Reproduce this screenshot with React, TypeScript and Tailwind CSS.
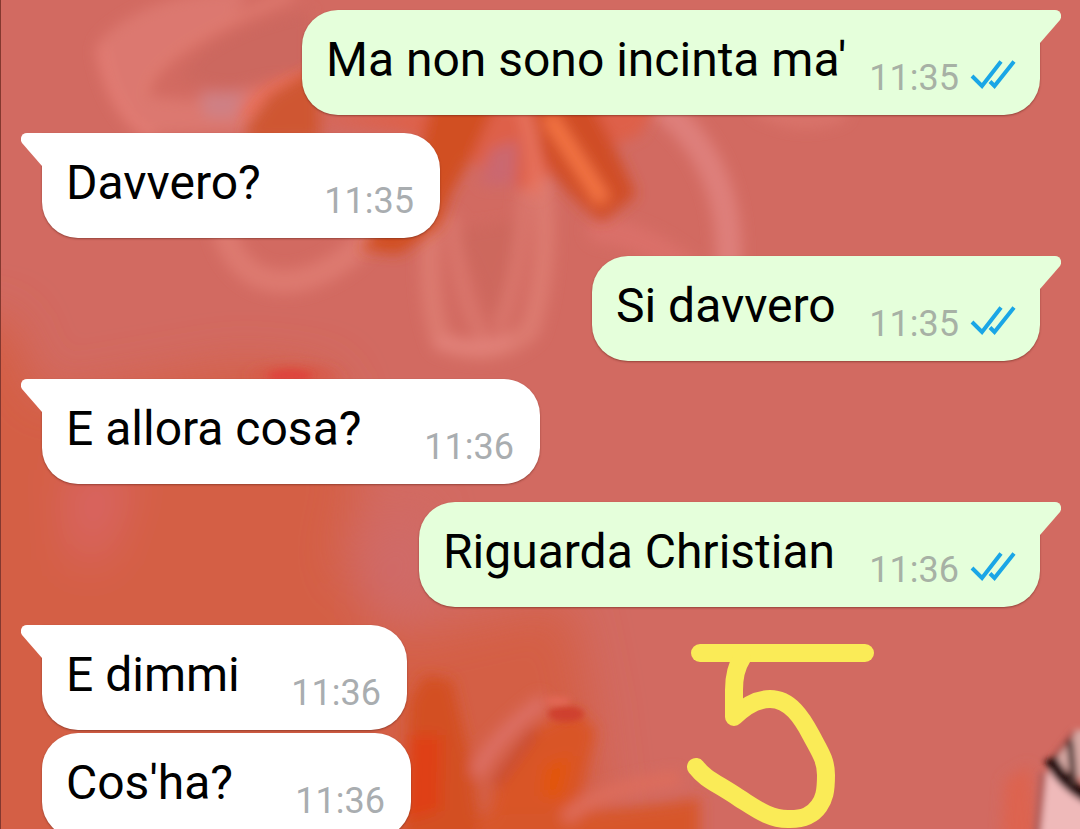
interface Message {
  text: string
  time: string
  sent?: boolean
  tail?: boolean
  width: string
}

const messages: Message[] = [
  { text: "Ma non sono incinta ma'", time: '11:35', sent: true, tail: true, width: 'w-[738px]' },
  { text: 'Davvero?', time: '11:35', tail: true, width: 'w-[398px]' },
  { text: 'Si davvero', time: '11:35', sent: true, tail: true, width: 'w-[448px]' },
  { text: 'E allora cosa?', time: '11:36', tail: true, width: 'w-[498px]' },
  { text: 'Riguarda Christian', time: '11:36', sent: true, tail: true, width: 'w-[621px]' },
  { text: 'E dimmi', time: '11:36', tail: true, width: 'w-[365px]' },
  { text: "Cos'ha?", time: '11:36', width: 'w-[369px]' },
]

function Wallpaper() {
  return (
    <svg
      aria-hidden="true"
      viewBox="0 0 1080 829"
      preserveAspectRatio="xMinYMin slice"
      className="absolute inset-0 h-full w-full"
    >
      <defs>
        <filter id="soft" filterUnits="userSpaceOnUse" x="-100" y="-100" width="1280" height="1030">
          <feGaussianBlur stdDeviation="7" />
        </filter>
        <filter id="wide" filterUnits="userSpaceOnUse" x="-200" y="-100" width="1480" height="1130">
          <feGaussianBlur stdDeviation="24" />
        </filter>
        <filter id="fine" filterUnits="userSpaceOnUse" x="-100" y="-100" width="1280" height="1030">
          <feGaussianBlur stdDeviation="3" />
        </filter>
      </defs>
      <rect width="1080" height="829" fill="#d26a61" />

      {/* large orange haze on the lower left */}
      <g filter="url(#wide)">
        <path d="M-160 310 L10 320 L40 400 L240 365 L330 375 L360 480 L340 560 L390 640 L570 600 L590 700 L620 960 L-160 960Z" fill="#d45f45" />
        <path d="M70 470 L130 470 L100 560 L75 560Z" fill="#da6668" />
        <path d="M370 540 L420 500 L430 600 L360 610Z" fill="#cf6a69" />
      </g>

      {/* upper flower: pale petals */}
      <g filter="url(#soft)" fill="none" strokeLinecap="round">
        <path d="M100 40 Q150 -10 250 -10 L230 20 Q150 60 140 95 L190 100 L300 80 L300 130 L150 135 Q105 90 100 40Z" fill="#dc7870" />
        <path d="M180 80 Q200 35 310 10 L310 70 L230 88Z" fill="#cc685e" />
        <path d="M102 50 Q112 110 150 135" stroke="#e27c73" strokeWidth="12" />
        <path d="M145 92 Q150 50 290 -5" stroke="#df7a70" strokeWidth="10" />
        <path d="M200 92 H245 L235 118 H205Z" fill="#cf8084" />
        <path d="M250 112 Q270 85 310 80" stroke="#e8705b" strokeWidth="18" />
        <path d="M455 230 L520 220 L495 325Z" fill="#cd675d" />
        <path d="M432 215 Q425 300 442 342 Q495 362 530 330 Q555 250 537 150" stroke="#dc7a70" strokeWidth="20" />
        <path d="M452 220 Q460 300 482 335 M500 325 Q525 260 525 170" stroke="#da776d" strokeWidth="13" />
        <path d="M440 342 Q480 352 505 340" stroke="#e2827a" strokeWidth="12" />
        <path d="M660 105 Q735 165 728 270" stroke="#de7f7a" strokeWidth="26" />
        <path d="M600 230 Q650 235 700 280" stroke="#da7069" strokeWidth="26" />
        <path d="M225 235 Q245 290 300 280 Q340 270 370 235" stroke="#dd7970" strokeWidth="24" />
        <path d="M760 108 Q800 130 840 114" stroke="#da756c" strokeWidth="14" />
      </g>

      {/* upper flower: orange centre */}
      <g filter="url(#soft)">
        <path d="M245 130 L270 95 L320 65 L320 140 L250 142Z" fill="#cf5732" />
        <path d="M310 120 L660 95 L640 135 L600 150 L520 190 L445 145 L400 130Z" fill="#de6048" />
        <path d="M360 250 L410 190 L435 90 L500 95 L475 150 L450 195 L440 225 L400 254Z" fill="#d14f24" />
        <path d="M530 95 L590 100 Q620 155 636 195 L602 222 Q555 190 526 125Z" fill="#d04e26" />
        <path d="M490 150 L518 140 L515 185 L480 185Z" fill="#cb6870" />
        <path d="M522 105 Q540 155 534 195" stroke="#e87560" strokeWidth="12" fill="none" />
        <path d="M548 115 L604 202" stroke="#f47544" strokeWidth="16" fill="none" />
      </g>
      <path d="M245 378 Q290 358 345 378Z" fill="#dc4c3a" filter="url(#soft)" />
      <ellipse cx="290" cy="376" rx="22" ry="6" fill="#de443c" filter="url(#fine)" />

      {/* lower flower */}
      <g filter="url(#soft)">
        <path d="M400 860 L410 700 L425 675 L452 680 L468 750 L485 860Z" fill="#d35020" />
        <path d="M410 735 L442 735 L440 810 L408 820Z" fill="#df3f18" />
        <path d="M478 860 L500 775 L535 730 L575 710 L596 730 L582 790 L550 860Z" fill="#d95528" />
        <path d="M545 765 L572 755 L562 800 L540 795Z" fill="#e25410" />
        <path d="M476 775 Q490 740 545 700" stroke="#dc6e64" strokeWidth="16" fill="none" />
        <path d="M495 785 L535 730" stroke="#c44a30" strokeWidth="8" />
        <path d="M470 860 L480 815 Q600 815 700 798 L700 860Z" fill="#d7562c" />
        <path d="M565 820 Q590 790 680 778" stroke="#de6d5c" strokeWidth="14" fill="none" />
      </g>
      <ellipse cx="566" cy="714" rx="18" ry="8" fill="#cf402e" filter="url(#fine)" />
      <ellipse cx="558" cy="701" rx="13" ry="4" fill="#e46756" filter="url(#fine)" />

      {/* face at the right edge */}
      <path d="M1005 780 L1030 765 L1040 860 L1000 860Z" fill="#dd6450" filter="url(#soft)" />
      <g filter="url(#fine)">
        <path d="M1044 775 L1054 765 L1100 805 V860 H1036Z" fill="#efb9b9" />
        <path d="M1052 762 L1075 730 L1100 730 V790Z" fill="#d8aaa5" />
        <path d="M1043 772 L1036 845" stroke="#b5605c" strokeWidth="8" />
        <path d="M1052 760 L1074 732" stroke="#a5504a" strokeWidth="5" />
        <path d="M1050 758 Q1062 785 1100 804" stroke="#260a09" strokeWidth="13" fill="none" />
        <path d="M1070 740 L1074 785" stroke="#4d3836" strokeWidth="7" />
      </g>
      <rect width="1" height="829" fill="#84382f" />
    </svg>
  )
}

function Tail({ sent }: { sent?: boolean }) {
  return (
    <svg
      aria-hidden="true"
      viewBox="0 0 22 34"
      className={`absolute top-0 h-[34px] w-[22px] ${
        sent ? '-right-[21px] -scale-x-100 text-[#e5ffdb]' : '-left-[21px] text-white'
      }`}
    >
      <path d="M22 0H6C1 0-2 5 1 10L21 33H22Z" fill="currentColor" />
    </svg>
  )
}

function ReadTicks() {
  return (
    <svg
      role="img"
      aria-label="Read"
      viewBox="0 0 46 30"
      className="ml-[11px] h-[30px] w-[46px]"
      fill="none"
      stroke="#1aa6e6"
      strokeWidth="4"
    >
      <path d="M2 16L12 26L31 1.500" />
      <path d="M20 21.500L24.500 26L44 1.500" />
    </svg>
  )
}

function Bubble({ message }: { message: Message }) {
  const { text, time, sent, tail, width } = message
  const corner = !tail ? '' : sent ? 'rounded-tr-none' : 'rounded-tl-none'

  return (
    <li className={`flex ${sent ? 'justify-end' : ''} ${tail ? 'mt-[18px] first:mt-0' : 'mt-[3px]'}`}>
      <div
        className={`relative flex h-[105px] items-baseline justify-between rounded-[36px] pt-[22px] pl-6 shadow-[0_1px_2px_rgba(90,30,20,0.5)] ${
          sent ? 'bg-[#e5ffdb] pr-6' : 'bg-white pr-[26px]'
        } ${corner} ${width}`}
      >
        {tail && <Tail sent={sent} />}
        <p className="text-[48px] leading-[56px] whitespace-nowrap text-black">{text}</p>
        <div className={`flex translate-y-[14px] items-baseline text-[36px] leading-[42px] ${sent ? 'text-[#a7b1a5]' : 'text-[#a9adb0]'}`}>
          <time>{time}</time>
          {sent && <ReadTicks />}
        </div>
      </div>
    </li>
  )
}

function Doodle() {
  return (
    <svg
      role="img"
      aria-label="5"
      viewBox="680 640 200 189"
      className="pointer-events-none absolute bottom-0 left-[63%] h-[189px] w-[200px]"
      fill="none"
      stroke="#faeb57"
      strokeWidth="18"
      strokeLinecap="round"
      strokeLinejoin="round"
    >
      <path d="M700 653H865" />
      <path d="M742 658Q734 670 734 690V717C746 705 757 699 770 699C790 699 802 718 811 735C820 752 826 760 826 775C826 792 824 799 819 806C812 816 803 819 790 819C770 820 755 808 739 798C717 783 706 780 696 767" />
    </svg>
  )
}

export default function App() {
  return (
    <main className="relative h-screen overflow-hidden bg-[#d26a61] font-[Roboto,sans-serif]">
      <Wallpaper />
      <ul className="relative flex flex-col pt-[10px] pr-10 pl-[42px]">
        {messages.map((message) => (
          <Bubble key={message.text} message={message} />
        ))}
      </ul>
      <Doodle />
    </main>
  )
}
